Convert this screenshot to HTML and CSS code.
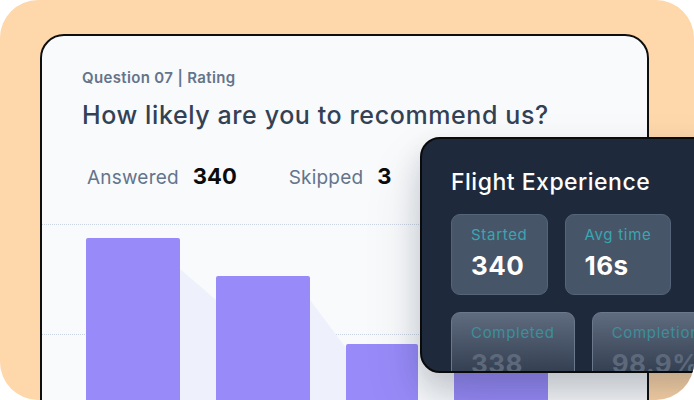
FILE: index.html
```html
<!DOCTYPE html>
<html lang="en">
<head>
    <meta charset="UTF-8">
    <meta name="viewport" content="width=device-width, initial-scale=1.0">
    <title>Question report</title>
    <link rel="stylesheet" href="styles.css">
</head>
<body>

    <div class="frame">

        <!-- question card -->
        <div class="card">
            <div class="eyebrow">Question 07 | Rating</div>
            <h1 class="question">How likely are you to recommend us?</h1>

            <div class="stats">
                <span class="stat-label">Answered</span><span class="stat-value">340</span>
                <span class="stat-label skipped">Skipped</span><span class="stat-value">3</span>
            </div>

            <div class="chart">
                <div class="gridline"></div>
                <svg class="links" width="600" height="200" viewBox="0 0 600 200">
                    <polygon points="138,44 174,75 174,200 138,200" fill="#eef1fb"/>
                    <polygon points="268,75 304,123 304,200 268,200" fill="#eef1fb"/>
                </svg>
                <div class="bars">
                    <div class="bar" style="height: 187px"></div>
                    <div class="bar" style="height: 149px"></div>
                    <div class="bar" style="height: 81px; width: 72px"></div>
                    <div class="bar" style="height: 60px"></div>
                </div>
            </div>
        </div>

        <!-- summary panel laid over the card -->
        <div class="panel">
            <h2 class="panel-title">Flight Experience</h2>
            <div class="tiles">
                <div class="tile">
                    <div class="tile-label">Started</div>
                    <div class="tile-value">340</div>
                </div>
                <div class="tile">
                    <div class="tile-label">Avg time</div>
                    <div class="tile-value">16s</div>
                </div>
            </div>
            <div class="tiles faded">
                <div class="tile">
                    <div class="tile-label">Completed</div>
                    <div class="tile-value">338</div>
                </div>
                <div class="tile">
                    <div class="tile-label">Completion rate</div>
                    <div class="tile-value">98.9%</div>
                </div>
            </div>
        </div>

    </div>

</body>
</html>
```

FILE: styles.css
```css
body {
    margin: 0;
    background: #ffffff;
    font-family: "Inter", "Liberation Sans", sans-serif;
}
.frame {
    position: relative;
    width: 694px;
    height: 400px;
    padding: 34px 0 0 40px;
    box-sizing: border-box;
    background: #fed7aa;
    border-radius: 38px;
    overflow: hidden;
}
.card {
    width: 609px;
    height: 420px;
    box-sizing: border-box;
    padding: 32px 0 0 0;
    background: #f8fafc;
    border: 2px solid #0f0f0f;
    border-radius: 24px;
    overflow: hidden;
}
.eyebrow {
    margin-left: 40px;
    font-size: 15px;
    line-height: 20px;
    font-weight: 600;
    letter-spacing: 0.35px;
    color: #64748b;
}
.question {
    margin: 11px 0 0 40px;
    font-size: 25px;
    line-height: 32px;
    font-weight: 500;
    letter-spacing: 0.6px;
    color: #334155;
}
.stats {
    display: flex;
    align-items: baseline;
    margin: 31px 0 0 45px;
    line-height: 28px;
}
.stat-label {
    font-size: 19px;
    letter-spacing: 0.2px;
    color: #64748b;
}
.stat-label.skipped {
    margin-left: 52px;
}
.stat-value {
    margin-left: 14px;
    font-size: 22px;
    font-weight: 700;
    color: #0b0b0b;
}
.chart {
    position: relative;
    height: 200px;
    margin-top: 32px;
    border-top: 1px dotted #cbd5e1;
}
.gridline {
    position: absolute;
    left: 0;
    right: 0;
    top: 109px;
    border-top: 1px dotted #cbd5e1;
}
.links {
    position: absolute;
    left: 0;
    top: 0;
}
.bars {
    position: relative;
    display: flex;
    align-items: flex-end;
    gap: 36px;
    height: 100%;
    padding-left: 44px;
}
.bar {
    width: 94px;
    background: #988bf9;
    border-radius: 2px 2px 0 0;
}
.panel {
    position: absolute;
    left: 420px;
    top: 137px;
    width: 320px;
    height: 236px;
    box-sizing: border-box;
    padding: 29px 0 0 29px;
    background: #1e293b;
    border: 2px solid #0a0a0a;
    border-radius: 20px;
    box-shadow: 0 14px 28px rgba(15, 23, 42, 0.16), 0 30px 60px rgba(15, 23, 42, 0.12);
    overflow: hidden;
}
.panel-title {
    margin: 0;
    font-size: 23px;
    line-height: 28px;
    font-weight: 500;
    letter-spacing: 0.5px;
    color: #ffffff;
}
.tiles {
    display: flex;
    gap: 17px;
    margin-top: 18px;
}
.tiles.faded {
    margin-top: 17px;
}
.tile {
    flex: none;
    padding: 10px 19px 12px;
    background: #475569;
    border: 1px solid #56647a;
    border-radius: 9px;
}
.tile-label {
    font-size: 15px;
    line-height: 20px;
    letter-spacing: 0.7px;
    color: #3aa6b0;
}
.tile-value {
    margin-top: 5px;
    font-size: 26px;
    line-height: 32px;
    font-weight: 700;
    letter-spacing: 0.5px;
    color: #ffffff;
}
.faded .tile {
    background: linear-gradient(#5f6b7e, #2e3a4c 85%);
    border-color: #6b778a;
}
.faded .tile-label {
    color: #3d8f9b;
}
.faded .tile-value {
    color: #5d697b;
}
```
